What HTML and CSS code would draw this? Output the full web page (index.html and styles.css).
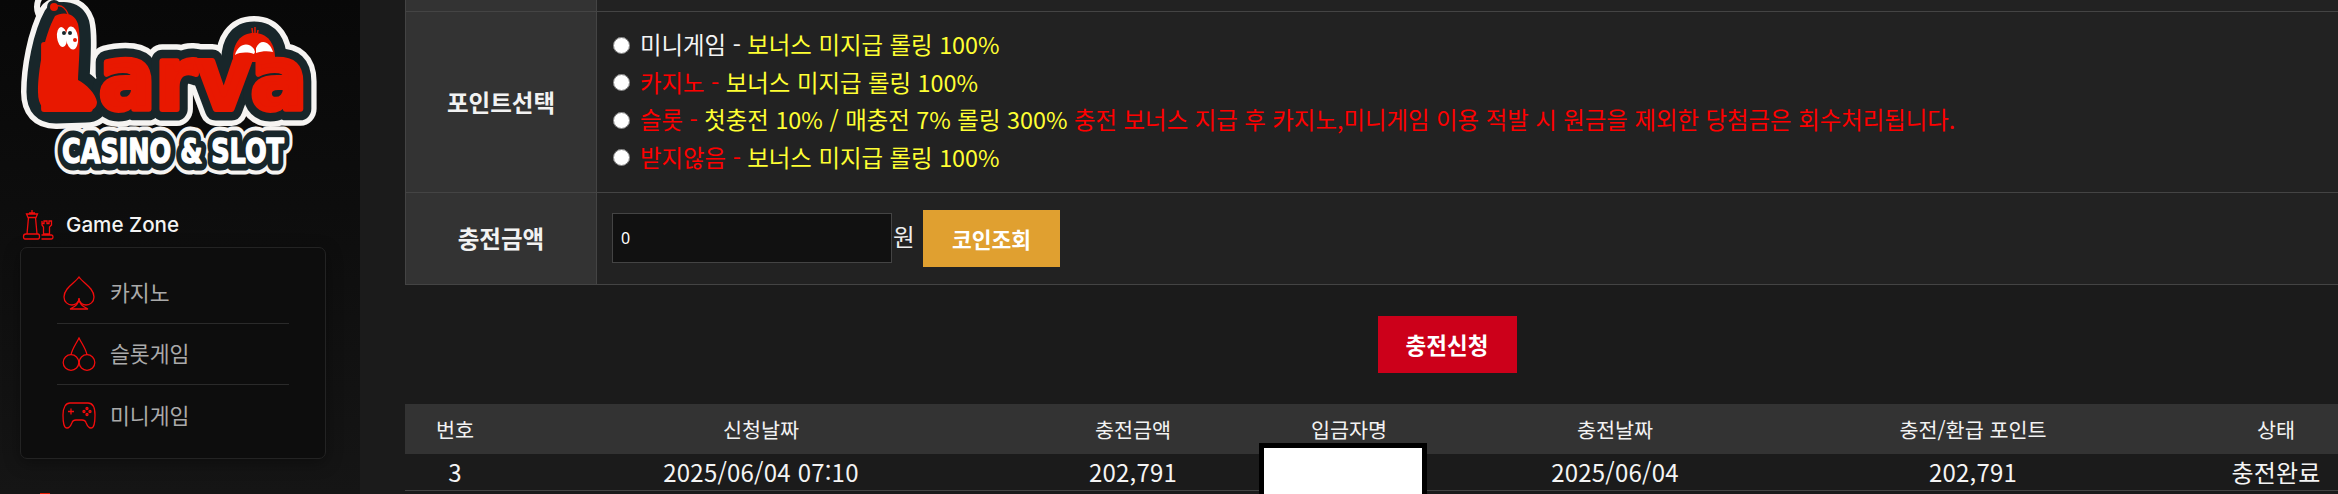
FILE: index.html
```html
<!DOCTYPE html>
<html lang="ko">
<head>
  <meta charset="UTF-8" />
  <meta name="viewport" content="width=device-width, initial-scale=1.0" />
  <title>Larva Casino & Slot - 충전신청</title>
  <link rel="stylesheet" href="styles.css">
</head>
<body>

  <aside class="sidebar">
    <div class="logo">
      <svg width="360" height="190" viewBox="0 0 360 190">
        <defs>
          <path id="worm" d="M55 16 C62 12 74 12 78 24 C81 36 79 60 78 80 C86 84 96 94 97 102 C97 108 92 111 86 111 L56 112 C44 112 38 106 38 92 C38 70 44 36 55 16 Z" />
          <path id="bird" d="M233 62 C232 44 240 33 254 33 C268 33 276 44 275 62 Z" />
        </defs>

        <!-- white outline -->
        <g class="logo-line-white">
          <circle cx="54" cy="7" r="3" />
          <use href="#worm" />
          <use href="#bird" />
          <text class="logo-big" x="99" y="109" textLength="208" lengthAdjust="spacingAndGlyphs">arva</text>
        </g>
        <text class="logo-small logo-caption-white" x="62" y="163" textLength="222" lengthAdjust="spacingAndGlyphs">CASINO &amp; SLOT</text>

        <!-- dark outline -->
        <g class="logo-line-dark">
          <use href="#worm" />
          <use href="#bird" />
          <text class="logo-big" x="99" y="109" textLength="208" lengthAdjust="spacingAndGlyphs">arva</text>
        </g>
        <circle cx="54" cy="7" r="7" fill="#18262a" />
        <path d="M54 7 C62 4 68 8 70 16" fill="none" stroke="#18262a" stroke-width="8" />
        <text class="logo-small logo-caption-dark" x="62" y="163" textLength="222" lengthAdjust="spacingAndGlyphs">CASINO &amp; SLOT</text>

        <!-- red fill -->
        <circle cx="54" cy="7" r="4" fill="#e81800" />
        <path d="M57 6 C62 5 66 9 68 14" fill="none" stroke="#e81800" stroke-width="1.5" />
        <use href="#bird" fill="#e81800" />
        <path d="M252 28 L253 36 M255 27 L255 36 M258 30 L257 36" stroke="#e81800" stroke-width="1.5" />
        <path d="M235 55 C240 52 248 52 254 54 L255 52 L254 49 C248 41 238 44 235 55 Z" fill="#fff" />
        <path d="M256 53 C262 51 268 51 273 52 C270 41 260 38 256 48 Z" fill="#fff" />
        <text class="logo-big logo-fill-red" x="99" y="109" textLength="208" lengthAdjust="spacingAndGlyphs">arva</text>
        <text class="logo-big logo-fill-red" x="36" y="109">L</text>
        <use href="#worm" fill="#e81800" />

        <!-- eyes -->
        <ellipse cx="62" cy="37" rx="5" ry="10" fill="#fff" transform="rotate(-6 62 37)" />
        <ellipse cx="72" cy="38" rx="6" ry="11.5" fill="#fff" transform="rotate(-6 72 38)" />
        <circle cx="75" cy="40" r="2" fill="#e81800" />
        <circle cx="64" cy="33" r="2" fill="#18262a" />
        <circle cx="70" cy="33" r="2" fill="#18262a" />

        <text class="logo-small logo-caption-top" x="62" y="163" textLength="222" lengthAdjust="spacingAndGlyphs">CASINO &amp; SLOT</text>
      </svg>
    </div>

    <div class="nav-title">
      <svg width="32" height="32" viewBox="0 0 32 32">
        <path d="M10 1V4M7 4H13M4.5 5H15.5L14 8.5H6L4.5 5ZM6.5 8.5L5 25H15L13.5 8.5M4 25H16C17 25 17.5 26 17.5 27.5S17 30 16 30H3C2 30 1.5 29 1.5 27.5S2 25 4 25Z" />
        <path d="M20 12V14.5H22V12H25V14.5H27V12H29.5V16L27.5 18V25H21.5V18L20 16V12ZM19.5 26H29.5C30.5 26 31 27 31 28S30.5 30 29.5 30H19.5" />
      </svg>
      <span>Game Zone</span>
    </div>

    <ul class="nav-panel">
      <li class="nav-item">
        <svg width="34" height="34" viewBox="0 0 34 34">
          <path d="M17 1C13 7 2 12 2 21C2 26 6 29 10 29C13 29 15.5 27 17 24C18.5 27 21 29 24 29C28 29 32 26 32 21C32 12 21 7 17 1Z" />
          <path d="M17 22C17 27 13 31 8 33H26C21 31 17 27 17 22Z" />
        </svg>
        <span>카지노</span>
      </li>
      <li class="nav-item">
        <svg width="34" height="34" viewBox="0 0 34 34">
          <circle cx="9" cy="25.5" r="7.8" />
          <circle cx="25" cy="25.5" r="7.8" />
          <path d="M9 18C10 12 14 7 17 1C20 7 24 12 25 18" />
        </svg>
        <span>슬롯게임</span>
      </li>
      <li class="nav-item">
        <svg width="34" height="27" viewBox="0 0 34 27">
          <path d="M8 1H26C30 1 33 5 33 13C33 21 32 26 29 26C26 26 25 23 24 20.5C23.5 19 22 18 20 18H14C12 18 10.5 19 10 20.5C9 23 8 26 5 26C2 26 1 21 1 13C1 5 4 1 8 1Z" />
          <path d="M9 6.5V12.5M6 9.5H12" />
          <circle cx="25" cy="6.5" r="1" />
          <circle cx="25" cy="12.5" r="1" />
          <circle cx="22" cy="9.5" r="1" />
          <circle cx="28" cy="9.5" r="1" />
        </svg>
        <span>미니게임</span>
      </li>
    </ul>

    <div class="nav-next"></div>
  </aside>

  <main class="content">
    <table class="form-table">
      <tr class="row-cut">
        <th></th>
        <td></td>
      </tr>
      <tr class="row-point">
        <th>포인트선택</th>
        <td>
          <label class="point-option">
            <input type="radio" name="point" />
            <span class="white">미니게임 - </span><span class="yellow">보너스 미지급 롤링 100%</span>
          </label>
          <label class="point-option">
            <input type="radio" name="point" />
            <span class="red">카지노 - </span><span class="yellow">보너스 미지급 롤링 100%</span>
          </label>
          <label class="point-option">
            <input type="radio" name="point" />
            <span class="red">슬롯 - </span><span class="yellow">첫충전 10% / 매충전 7% 롤링 300%</span><span class="red"> 충전 보너스 지급 후 카지노,미니게임 이용 적발 시 원금을 제외한 당첨금은 회수처리됩니다.</span>
          </label>
          <label class="point-option">
            <input type="radio" name="point" />
            <span class="red">받지않음 - </span><span class="yellow">보너스 미지급 롤링 100%</span>
          </label>
        </td>
      </tr>
      <tr class="row-amount">
        <th>충전금액</th>
        <td>
          <div class="amount-box">
            <input type="text" class="amount-input" value="0" />
            <span class="won">원</span>
            <button type="button" class="coin-btn">코인조회</button>
          </div>
        </td>
      </tr>
    </table>

    <div class="submit-wrap">
      <button type="button" class="submit-btn">충전신청</button>
    </div>

    <div class="list-wrap">
      <table class="list-table">
        <colgroup>
          <col class="col-no"><col class="col-req"><col class="col-amount"><col class="col-name"><col class="col-date"><col class="col-point"><col class="col-state">
        </colgroup>
        <thead>
          <tr>
            <th>번호</th>
            <th>신청날짜</th>
            <th>충전금액</th>
            <th>입금자명</th>
            <th>충전날짜</th>
            <th>충전/환급 포인트</th>
            <th>상태</th>
          </tr>
        </thead>
        <tbody>
          <tr>
            <td>3</td>
            <td>2025/06/04 07:10</td>
            <td>202,791</td>
            <td></td>
            <td>2025/06/04</td>
            <td>202,791</td>
            <td>충전완료</td>
          </tr>
        </tbody>
      </table>
      <div class="mask"></div>
    </div>
  </main>

</body>
</html>
```

FILE: styles.css
```css
* {
  margin: 0;
  padding: 0;
  box-sizing: border-box;
}

html, body {
  height: 494px;
  overflow: hidden;
}

body {
  display: flex;
  background: #1b1b1b;
  color: #fff;
  font-family: "Noto Sans CJK KR", "Noto Sans", sans-serif;
}

/* sidebar */
.sidebar {
  width: 360px;
  flex: none;
  height: 494px;
  overflow: hidden;
  background: linear-gradient(to bottom, #080808, #0e0e0e 50%, #151515);
}

.logo {
  height: 209px;
}

.logo svg {
  display: block;
}

.logo-big {
  font-family: "DejaVu Sans", sans-serif;
  font-weight: 700;
  font-size: 88px;
}

.logo-small {
  font-family: "DejaVu Sans", sans-serif;
  font-weight: 700;
  font-size: 34px;
  stroke-linejoin: round;
}

.logo-line-white {
  fill: #f6f4f2;
  stroke: #f6f4f2;
  stroke-width: 34px;
  stroke-linejoin: round;
}

.logo-line-dark {
  fill: #18262a;
  stroke: #18262a;
  stroke-width: 23px;
  stroke-linejoin: round;
}

.logo-fill-red {
  fill: #e81800;
  stroke: #e81800;
  stroke-width: 6px;
  stroke-linejoin: round;
}

.logo-caption-white {
  fill: #f6f4f2;
  stroke: #f6f4f2;
  stroke-width: 23px;
}

.logo-caption-dark {
  fill: #18262a;
  stroke: #18262a;
  stroke-width: 15px;
}

.logo-caption-top {
  fill: #fff;
  stroke: #fff;
  stroke-width: 1.5px;
}

.nav-title {
  display: flex;
  align-items: center;
  gap: 12px;
  height: 31px;
  padding-left: 22px;
  font-family: Inter, sans-serif;
  font-size: 20.6px;
  font-weight: 500;
  color: #f4f4f4;
}

.nav-title svg,
.nav-item svg {
  fill: none;
  stroke: #f20c0c;
  stroke-width: 1.3;
  flex: none;
}

.nav-panel {
  list-style: none;
  width: 306px;
  height: 212px;
  margin: 7px 0 0 20px;
  padding: 15px 36px 0;
  border: 1px solid #232323;
  border-radius: 7px;
  background: #0d0d0d;
  box-shadow: 0 4px 16px rgba(0, 0, 0, 0.35);
}

.nav-item {
  display: flex;
  align-items: center;
  gap: 14px;
  height: 61px;
  padding-left: 5px;
  font-size: 21.6px;
  color: #aaa;
  border-bottom: 1px solid #2a2a2a;
}

.nav-item span {
  padding-bottom: 3px;
}

.nav-item:last-child {
  border-bottom: none;
}

.nav-next {
  width: 10px;
  height: 4px;
  margin: 34px 0 0 40px;
  background: #e81800;
}

/* form table */
.content {
  flex: 1;
  min-width: 0;
  height: 494px;
  overflow: hidden;
  padding-left: 45px;
}

.form-table {
  width: 100%;
  border-collapse: collapse;
  table-layout: fixed;
}

.form-table th,
.form-table td {
  border: 1px solid #444;
  border-top: none;
  background: #222;
}

.form-table tr + tr th,
.form-table tr + tr td {
  border-top: 1px solid #444;
}

.form-table th {
  width: 191px;
  background: #333;
  font-size: 23.5px;
  font-weight: 700;
  color: #f2f2f2;
}

.form-table td {
  padding-left: 15px;
  border-right: none;
}

.row-cut {
  height: 11px;
}

.row-point {
  height: 181px;
}

.row-amount {
  height: 92px;
}

.point-option {
  display: flex;
  align-items: center;
  height: 37.5px;
  font-size: 23.4px;
  white-space: pre;
}

.point-option span {
  padding-bottom: 2px;
}

.point-option input {
  width: 17px;
  height: 17px;
  margin: 0 10px 0 1px;
  flex: none;
}

.white { color: #f4f4f4; }
.yellow { color: #ffff33; }
.red { color: #f00; }

.amount-box {
  display: flex;
  align-items: center;
}

.amount-input {
  width: 280px;
  height: 50px;
  padding: 0 8px;
  border: 1px solid #444;
  background: #111;
  color: #fff;
  font-family: "Noto Sans", sans-serif;
  font-size: 16px;
}

.won {
  width: 31px;
  padding: 0 0 4px 1px;
  font-size: 23.5px;
  color: #eee;
}

.coin-btn,
.submit-btn {
  border: none;
  color: #fff;
  font-family: inherit;
  font-weight: 700;
  cursor: pointer;
}

.coin-btn {
  width: 137px;
  height: 57px;
  background: #e0a030;
  font-size: 21.5px;
}

/* page behind is wider than the shot, so the button sits right of the visible middle */
.submit-wrap {
  display: flex;
  justify-content: center;
  width: 2084px;
  padding: 31px 0;
}

.submit-btn {
  width: 139px;
  height: 57px;
  background: #cc001a;
  font-size: 22.5px;
}

/* list table */
.list-wrap {
  position: relative;
}

.list-table {
  width: 1982px;
  border-collapse: collapse;
  table-layout: fixed;
}

.col-no { width: 100px; }
.col-req { width: 512px; }
.col-amount { width: 232px; }
.col-name { width: 200px; }
.col-date { width: 332px; }
.col-point { width: 384px; }
.col-state { width: 222px; }

.list-table th {
  height: 50px;
  background: #333;
  font-size: 20.7px;
  font-weight: 400;
  color: #f2f2f2;
}

.list-table td {
  height: 37px;
  text-align: center;
  font-size: 24px;
  letter-spacing: 0.2px;
  color: #f4f4f4;
  border-bottom: 1px solid #444;
}

.mask {
  position: absolute;
  left: 854px;
  top: 39px;
  width: 168px;
  height: 60px;
  background: #fff;
  border: 5px solid #000;
}
```
